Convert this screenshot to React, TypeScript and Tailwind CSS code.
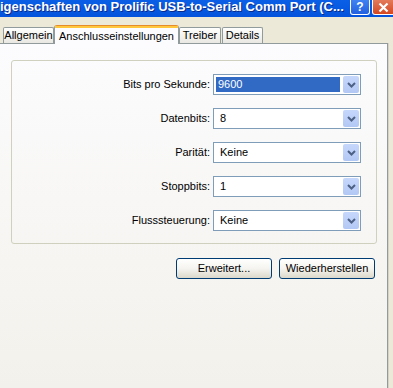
import React from "react";

const rows = [
  { label: "Bits pro Sekunde:", value: "9600", selected: true },
  { label: "Datenbits:", value: "8" },
  { label: "Parität:", value: "Keine" },
  { label: "Stoppbits:", value: "1" },
  { label: "Flusssteuerung:", value: "Keine" },
];

function Chevron() {
  return (
    <svg width="9" height="6" viewBox="0 0 9 6">
      <path d="M1 1 L4.5 4.5 L8 1" fill="none" stroke="#4d6185" strokeWidth="2" />
    </svg>
  );
}

function Combo({ value, selected }: { value: string; selected?: boolean }) {
  return (
    <div className="flex h-[21px] w-[148px] border border-[#7f9db9] bg-white">
      <div className="flex flex-1 items-center p-[2px]">
        {selected ? (
          <div className="flex h-full w-full items-center bg-[#316ac5] pl-[2px] text-white">
            {value}
          </div>
        ) : (
          <span className="pl-[4px] text-black">{value}</span>
        )}
      </div>
      <div className="m-[1px] flex w-[16px] items-center justify-center rounded-[2px] bg-gradient-to-b from-[#c6d7fc] to-[#b2c8f4]">
        <Chevron />
      </div>
    </div>
  );
}

function Tab({ label, className }: { label: string; className: string }) {
  return (
    <div
      className={`flex h-[16px] items-center justify-center rounded-t-[2px] border border-b-0 border-[#919b9c] bg-gradient-to-b from-[#fefefe] to-[#e9e8e2] ${className}`}
    >
      {label}
    </div>
  );
}

function XpButton({ label }: { label: string }) {
  return (
    <button className="flex h-[21px] w-[96px] items-center justify-center rounded-[3px] border border-[#003c74] bg-gradient-to-b from-[#ffffff] via-[#f5f4ef] to-[#dcd8cb] text-[11px] text-black">
      {label}
    </button>
  );
}

export default function App() {
  return (
    <div className="flex h-[388px] w-[393px] flex-col overflow-hidden bg-[#ece9d8] font-['Liberation_Sans',Arial,sans-serif] text-[11px] text-black">
      {/* title bar */}
      <div className="flex h-[17px] items-start justify-between bg-gradient-to-b from-[#0a5fe6] to-[#0553dc]">
        <div className="whitespace-nowrap text-[13px] font-bold leading-[14px] text-white [text-shadow:1px_1px_0_#0a2a8a]">
          igenschaften von Prolific USB-to-Serial Comm Port (C...
        </div>
        <div className="flex gap-[2px]">
          <div className="flex h-[15px] w-[20px] items-center justify-center rounded-b-[3px] border border-t-0 border-white bg-gradient-to-b from-[#3f82f2] to-[#2260e0] text-[12px] font-bold leading-[12px] text-white">
            ?
          </div>
          <div className="mr-[-2px] flex h-[15px] w-[23px] items-center justify-center rounded-b-[3px] border border-t-0 border-white bg-gradient-to-b from-[#e27a5a] to-[#d5461f]">
            <svg width="11" height="11" viewBox="0 0 11 11">
              <path d="M1.5 1.5 L9.5 9.5 M9.5 1.5 L1.5 9.5" stroke="#fff" strokeWidth="2.2" />
            </svg>
          </div>
        </div>
      </div>

      {/* tabs */}
      <div className="flex h-[26px] items-end pl-[3px]">
        <Tab label="Allgemein" className="w-[51px]" />
        <div className="relative z-10 mb-[-1px] flex h-[19px] w-[125px] items-start justify-center rounded-t-[3px] border border-b-0 border-[#919b9c] border-t-[#e68b2c] bg-[#fcfcfe] pt-[1px]">
          <div className="absolute left-0 right-0 top-0 h-[2px] bg-[#ffc73c]" />
          <span className="mt-[1px]">Anschlusseinstellungen</span>
        </div>
        <Tab label="Treiber" className="w-[42px]" />
        <Tab label="Details" className="ml-[1px] w-[41px]" />
      </div>

      {/* page */}
      <div className="flex flex-1">
        <div className="flex w-[388px] flex-col border-r border-t border-[#919b9c] bg-gradient-to-b from-[#fcfcfe] to-[#f3f1eb]">
          <div className="ml-[11px] mt-[16px] h-[184px] w-[366px] rounded-[3px] border border-[#d0d0bf] pt-[13px]">
            <div className="grid grid-cols-[198px_148px] gap-x-[3px] gap-y-[13px]">
              {rows.map((r) => (
                <React.Fragment key={r.label}>
                  <div className="flex h-[21px] items-center justify-end">{r.label}</div>
                  <Combo value={r.value} selected={r.selected} />
                </React.Fragment>
              ))}
            </div>
          </div>
          <div className="mt-[14px] flex justify-end gap-[7px] pr-[12px]">
            <XpButton label="Erweitert..." />
            <XpButton label="Wiederherstellen" />
          </div>
        </div>
        <div className="w-[1px] bg-[#d6d3c6]" />
      </div>
    </div>
  );
}
